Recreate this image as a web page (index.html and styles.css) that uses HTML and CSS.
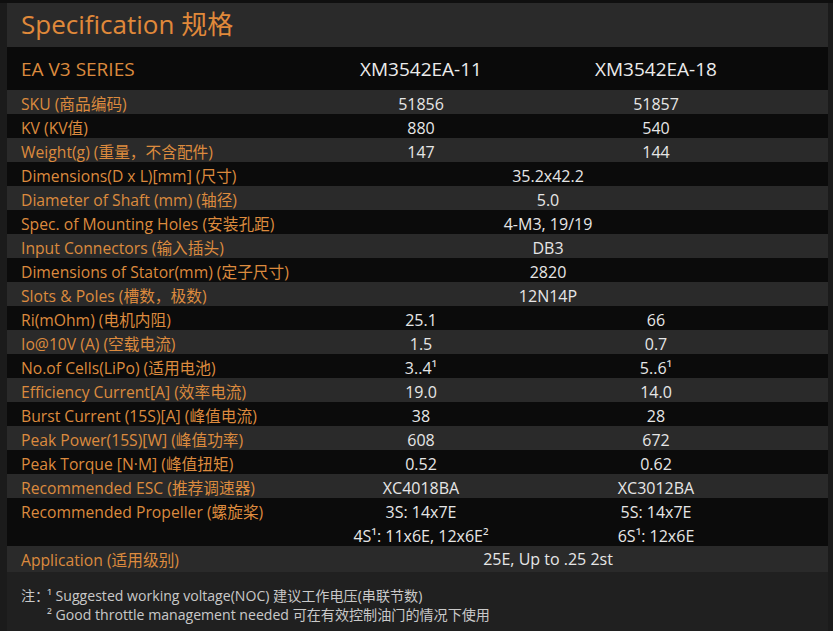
FILE: index.html
```html
<!DOCTYPE html>
<html lang="zh">
<head>
<meta charset="utf-8">
<title>Specification</title>
<link rel="stylesheet" href="styles.css">
</head>
<body>
<div class="page">
  <div class="title">Specification 规格</div>
  <div class="row head">
    <div class="lab">EA V3 SERIES</div>
    <div class="val">XM3542EA-11</div>
    <div class="val">XM3542EA-18</div>
  </div>
  <div class="row g"><div class="lab">SKU (商品编码)</div><div class="val">51856</div><div class="val">51857</div></div>
  <div class="row b"><div class="lab">KV (KV值)</div><div class="val">880</div><div class="val">540</div></div>
  <div class="row g"><div class="lab">Weight(g) (重量，不含配件)</div><div class="val">147</div><div class="val">144</div></div>
  <div class="row b"><div class="lab">Dimensions(D x L)[mm] (尺寸)</div><div class="val span">35.2x42.2</div></div>
  <div class="row g"><div class="lab">Diameter of Shaft (mm) (轴径)</div><div class="val span">5.0</div></div>
  <div class="row b"><div class="lab">Spec. of Mounting Holes (安装孔距)</div><div class="val span">4-M3, 19/19</div></div>
  <div class="row g"><div class="lab">Input Connectors (输入插头)</div><div class="val span">DB3</div></div>
  <div class="row b"><div class="lab">Dimensions of Stator(mm) (定子尺寸)</div><div class="val span">2820</div></div>
  <div class="row g"><div class="lab">Slots &amp; Poles (槽数，极数)</div><div class="val span">12N14P</div></div>
  <div class="row b"><div class="lab">Ri(mOhm) (电机内阻)</div><div class="val">25.1</div><div class="val">66</div></div>
  <div class="row g"><div class="lab">Io@10V (A) (空载电流)</div><div class="val">1.5</div><div class="val">0.7</div></div>
  <div class="row b"><div class="lab">No.of Cells(LiPo) (适用电池)</div><div class="val">3..4¹</div><div class="val">5..6¹</div></div>
  <div class="row g"><div class="lab">Efficiency Current[A] (效率电流)</div><div class="val">19.0</div><div class="val">14.0</div></div>
  <div class="row b"><div class="lab">Burst Current (15S)[A] (峰值电流)</div><div class="val">38</div><div class="val">28</div></div>
  <div class="row g"><div class="lab">Peak Power(15S)[W] (峰值功率)</div><div class="val">608</div><div class="val">672</div></div>
  <div class="row b"><div class="lab">Peak Torque [N·M] (峰值扭矩)</div><div class="val">0.52</div><div class="val">0.62</div></div>
  <div class="row g"><div class="lab">Recommended ESC (推荐调速器)</div><div class="val">XC4018BA</div><div class="val">XC3012BA</div></div>
  <div class="row b tall">
    <div class="lab">Recommended Propeller (螺旋桨)</div>
    <div class="val"><div>3S: 14x7E</div><div>4S¹: 11x6E, 12x6E²</div></div>
    <div class="val"><div>5S: 14x7E</div><div>6S¹: 12x6E</div></div>
  </div>
  <div class="row g app"><div class="lab">Application (适用级别)</div><div class="val span">25E, Up to .25 2st</div></div>
  <div class="notes">
    <div class="note-key">注：</div>
    <div class="note-lines">
      <div>¹ Suggested working voltage(NOC) 建议工作电压(串联节数)</div>
      <div>² Good throttle management needed 可在有效控制油门的情况下使用</div>
    </div>
  </div>
</div>
</body>
</html>
```

FILE: styles.css
```css
html, body {
  margin: 0;
  padding: 0;
}
body {
  background: #1b1b1b;
  font-family: "Open Sans", "Noto Sans", "Noto Sans CJK SC", sans-serif;
  width: 833px;
  height: 631px;
  overflow: hidden;
  border-top: 3px solid #0f0f0f;
  box-sizing: border-box;
}
.page {
  margin-left: 7px;
  width: 821px;
  background: #202020;
  height: 628px;
}
.title {
  height: 44px;
  background: #2a2a2a;
  color: #e0893a;
  font-size: 26px;
  line-height: 42px;
  padding-left: 14px;
}
.row {
  display: grid;
  grid-template-columns: 306px 216px 254px;
  height: 24px;
  box-sizing: border-box;
  padding-top: 2px;
  align-items: center;
  font-size: 15.7px;
}
.row.g { background: #2a2a2a; }
.row.b { background: #0b0b0b; }
.row.head {
  height: 43px;
  padding-top: 1px;
  background: #0a0a0a;
  font-size: 19px;
}
.lab {
  color: #dc8a3e;
  padding-left: 14px;
  white-space: nowrap;
}
.val {
  color: #e6e6e6;
  text-align: center;
  white-space: nowrap;
  font-size: 16px;
}
.head .val { color: #ececec; font-size: 19px; }
.val.span { grid-column: 2 / span 2; }
.row.tall {
  height: 48px;
  align-items: start;
  line-height: 24px;
}
.row.tall .lab { line-height: 24px; }
.row.app { height: 26px; padding-top: 0; }
.notes {
  display: flex;
  color: #c9c9c9;
  font-size: 14.1px;
  line-height: 19px;
  padding: 14px 0 0 14px;
}
.note-key { width: 26px; }
```
